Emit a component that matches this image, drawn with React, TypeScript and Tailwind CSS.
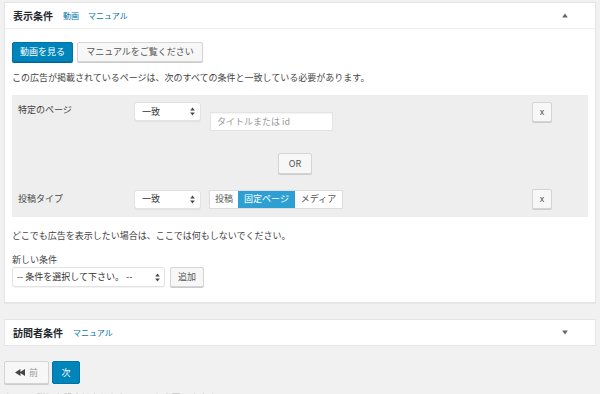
import React from "react";

const font = { fontFamily: '"Noto Sans CJK JP", "Noto Sans", sans-serif' };

function SelectArrows() {
  return (
    <svg width="5" height="9" viewBox="0 0 5 9" className="shrink-0">
      <path d="M2.5 0.5 L4.8 3.6 L0.2 3.6 Z" fill="#444" />
      <path d="M2.5 8.5 L4.8 5.4 L0.2 5.4 Z" fill="#444" />
    </svg>
  );
}

function Select({ label, className }: { label: string; className: string }) {
  return (
    <div
      className={`flex h-[19px] items-center justify-between rounded-[3px] border border-[#e2e2e2] bg-white pl-[7px] pr-[5px] text-[9px] text-[#333] shadow-[0_1px_1px_rgba(0,0,0,0.05)] ${className}`}
    >
      <span>{label}</span>
      <SelectArrows />
    </div>
  );
}

function SmallButton({ children, className = "" }: { children: React.ReactNode; className?: string }) {
  return (
    <button
      className={`flex h-[20px] items-center justify-center rounded-[2px] border border-[#d4d4d4] bg-[#f7f7f7] text-[9px] text-[#555] shadow-[0_1px_0_#ccc] ${className}`}
    >
      {children}
    </button>
  );
}

function BoxHeader({ title, links, up }: { title: string; links: string[]; up: boolean }) {
  return (
    <div className="flex h-[26px] items-center border-b border-[#eeeeee] pl-[8px] pr-[27px]">
      <span className="text-[10px] font-bold text-[#23282d]">{title}</span>
      {links.map((l, i) => (
        <span key={l} className={`text-[8px] text-[#0073aa] ${i === 0 ? "ml-[10px]" : "ml-[9px]"}`}>
          {l}
        </span>
      ))}
      <svg width="6" height="5" viewBox="0 0 6 5" className="ml-auto">
        {up ? <path d="M3 0.5 L5.8 4.5 L0.2 4.5 Z" fill="#666" /> : <path d="M3 4.5 L5.8 0.5 L0.2 0.5 Z" fill="#666" />}
      </svg>
    </div>
  );
}

export default function App() {
  return (
    <div className="h-[394px] w-[600px] overflow-hidden bg-[#f1f1f1] pt-[2px]" style={font}>
      {/* display conditions box */}
      <div className="mx-[4px] border border-[#e5e5e5] bg-white shadow-[0_1px_1px_rgba(0,0,0,0.04)]">
        <BoxHeader title="表示条件" links={["動画", "マニュアル"]} up />
        <div className="px-[7px] pb-[15px] pt-[13px]">
          <div className="flex gap-[4px]">
            <button className="h-[20px] w-[61px] rounded-[2px] border border-[#0073aa] bg-[#0085ba] text-[9px] text-white shadow-[0_1px_0_#006799]">
              動画を見る
            </button>
            <SmallButton className="w-[126px]">マニュアルをご覧ください</SmallButton>
          </div>
          <p className="mt-[9px] text-[9px] leading-[13px] text-[#444]">
            この広告が掲載されているページは、次のすべての条件と一致している必要があります。
          </p>

          {/* conditions table */}
          <div className="mt-[11px] bg-[#eeeeee] pb-[8px] pl-[6px] pr-[36px] pt-[7px]">
            <div className="flex items-start">
              <span className="w-[116px] pt-[1px] text-[9px] leading-[13px] text-[#444]">特定のページ</span>
              <Select label="一致" className="w-[67px]" />
              <div className="ml-[9px] mt-[10px] flex h-[19px] w-[123px] items-center border border-[#e4e4e4] bg-white px-[6px] text-[9px] text-[#999] shadow-[inset_0_1px_2px_rgba(0,0,0,0.05)]">
                タイトルまたは id
              </div>
              <SmallButton className="ml-auto w-[20px] text-[8px]">x</SmallButton>
            </div>
            <div className="mt-[22px] flex justify-center pl-[20px]">
              <SmallButton className="h-[21px] w-[34px] text-[9px]">OR</SmallButton>
            </div>
            <div className="mt-[15px] flex items-center">
              <span className="w-[116px] text-[9px] text-[#444]">投稿タイプ</span>
              <Select label="一致" className="w-[67px]" />
              <div className="ml-[8px] flex h-[19px] border border-[#dddddd] bg-white text-[9px]">
                <span className="flex w-[28px] items-center justify-center text-[#555]">投稿</span>
                <span className="flex w-[57px] items-center justify-center bg-[#2e9fd2] text-white">固定ページ</span>
                <span className="flex w-[47px] items-center justify-center text-[#555]">メディア</span>
              </div>
              <SmallButton className="ml-auto w-[20px] text-[8px]">x</SmallButton>
            </div>
          </div>

          <p className="mt-[12px] text-[9px] leading-[13px] text-[#444]">
            どこでも広告を表示したい場合は、ここでは何もしないでください。
          </p>
          <p className="mt-[11px] text-[9px] leading-[13px] text-[#444]">新しい条件</p>
          <div className="mt-[1px] flex items-center gap-[5px]">
            <Select label="-- 条件を選択して下さい。 --" className="h-[20px] w-[153px] !pl-[4px] !pr-[4px]" />
            <SmallButton className="w-[34px]">追加</SmallButton>
          </div>
        </div>
      </div>

      {/* visitor conditions box */}
      <div className="mx-[4px] mt-[16px] border border-[#e5e5e5] bg-white">
        <div className="flex h-[25px] items-center pl-[8px] pr-[27px]">
          <span className="text-[10px] font-bold text-[#23282d]">訪問者条件</span>
          <span className="ml-[10px] text-[8px] text-[#0073aa]">マニュアル</span>
          <svg width="6" height="5" viewBox="0 0 6 5" className="ml-auto">
            <path d="M3 4.5 L5.8 0.5 L0.2 0.5 Z" fill="#666" />
          </svg>
        </div>
      </div>

      {/* navigation */}
      <div className="ml-[4px] mt-[15px] flex gap-[3px]">
        <SmallButton className="h-[23px] w-[45px] gap-[3px]">
          <svg width="11" height="7" viewBox="0 0 11 7">
            <path d="M0 3.5 L5.5 0 L5.5 7 Z" fill="#444" />
            <path d="M4.5 3.5 L10 0 L10 7 Z" fill="#444" />
          </svg>
          <span className="text-[#999]">前</span>
        </SmallButton>
        <button className="h-[23px] w-[28px] rounded-[2px] border border-[#0073aa] bg-[#0085ba] text-[9px] text-white">
          次
        </button>
      </div>
      <p className="ml-[5px] mt-[7px] text-[9px] leading-[13px] text-[#bbb]">
        ヒント: 詳細な設定はあとからいつでも変更できます。
      </p>
    </div>
  );
}
